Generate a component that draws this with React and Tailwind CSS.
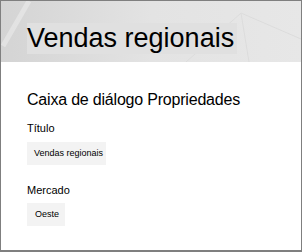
import React from "react";

export default function App() {
  const font = { fontFamily: '"Liberation Sans", Arial, sans-serif' };
  return (
    <div
      className="w-[302px] h-[252px] border border-b-2 border-[#7f7f7f] bg-white flex flex-col overflow-hidden"
      style={font}
    >
      <div className="relative h-[61px] shrink-0 bg-gradient-to-r from-[#d4d4d4] via-[#e3e3e3] to-[#e7e7e7] overflow-hidden">
        <svg className="absolute inset-0" width="300" height="61" viewBox="0 0 300 61">
          <path d="M2 45 L28 0" stroke="#ececec" strokeWidth="5" opacity="0.6" />
          <path d="M185 61 L240 12 L300 38" stroke="#dcdcdc" strokeWidth="1" fill="none" />
          <path d="M240 12 L248 61" stroke="#dcdcdc" strokeWidth="1" fill="none" />
        </svg>
        <div className="relative ml-[26px] mt-[22px] w-[210px] h-[31px] bg-[#e0e0e0] text-[27px] leading-[31px] text-black whitespace-nowrap">
          Vendas regionais
        </div>
      </div>
      <div className="pl-[26px] flex flex-col items-start">
        <div className="mt-[28px] text-[16px] leading-[20px] tracking-[-0.2px] text-black whitespace-nowrap">
          Caixa de diálogo Propriedades
        </div>
        <div className="mt-[11px] text-[11px] leading-[14px] text-black">Título</div>
        <div className="mt-[7px] w-[79px] h-[23px] bg-[#f3f3f3] pl-[7px] text-[9px] leading-[23px] text-black whitespace-nowrap overflow-hidden">
          Vendas regionais
        </div>
        <div className="mt-[18px] text-[11px] leading-[14px] text-black">Mercado</div>
        <div className="mt-[6px] w-[38px] h-[23px] bg-[#f3f3f3] pl-[8px] text-[9px] leading-[23px] text-black whitespace-nowrap">
          Oeste
        </div>
      </div>
    </div>
  );
}
